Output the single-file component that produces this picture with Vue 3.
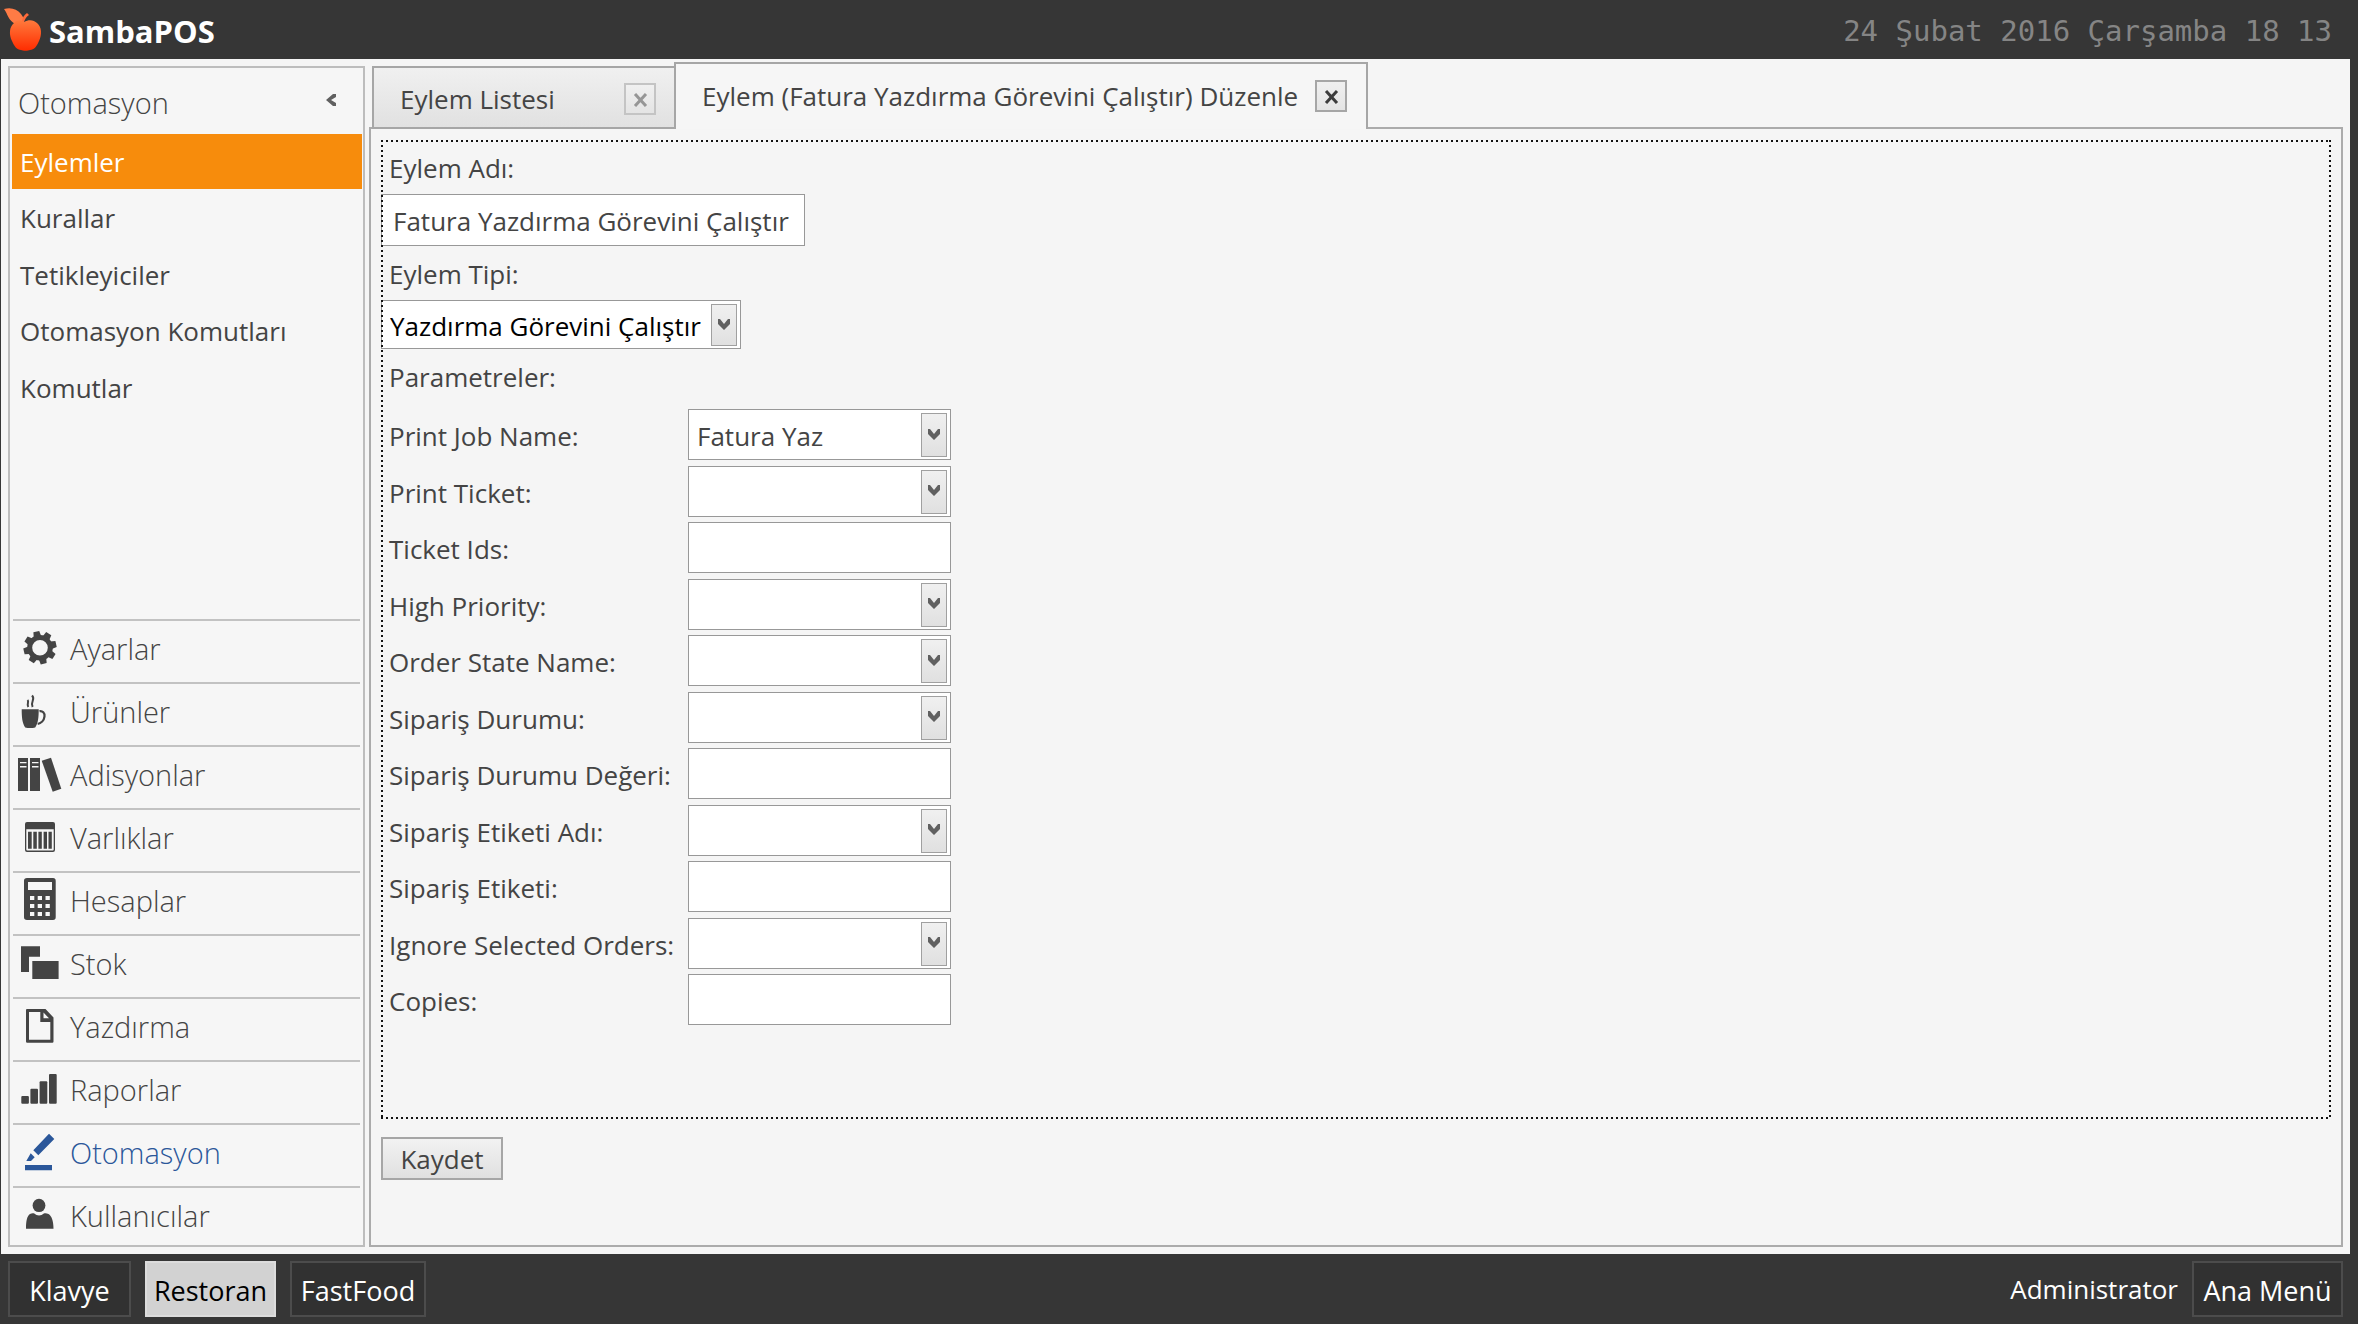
<script setup>
import { ref } from 'vue'

const sections = ['Eylemler', 'Kurallar', 'Tetikleyiciler', 'Otomasyon Komutları', 'Komutlar']
const activeSection = ref('Eylemler')

const modules = [
  { id: 'settings', label: 'Ayarlar' },
  { id: 'products', label: 'Ürünler' },
  { id: 'tickets', label: 'Adisyonlar' },
  { id: 'entities', label: 'Varlıklar' },
  { id: 'accounts', label: 'Hesaplar' },
  { id: 'stock', label: 'Stok' },
  { id: 'printing', label: 'Yazdırma' },
  { id: 'reports', label: 'Raporlar' },
  { id: 'automation', label: 'Otomasyon' },
  { id: 'users', label: 'Kullanıcılar' }
]
const activeModule = ref('automation')

const gearTeeth = [0, 1, 2, 3, 4, 5, 6, 7].map(n => n * 45 - 13)

const actionName = ref('Fatura Yazdırma Görevini Çalıştır')

const params = ref([
  { id: 'job', label: 'Print Job Name:', combo: true, value: 'Fatura Yaz' },
  { id: 'ticket', label: 'Print Ticket:', combo: true, value: '' },
  { id: 'ids', label: 'Ticket Ids:', combo: false, value: '' },
  { id: 'priority', label: 'High Priority:', combo: true, value: '' },
  { id: 'state-name', label: 'Order State Name:', combo: true, value: '' },
  { id: 'state', label: 'Sipariş Durumu:', combo: true, value: '' },
  { id: 'state-value', label: 'Sipariş Durumu Değeri:', combo: false, value: '' },
  { id: 'tag-name', label: 'Sipariş Etiketi Adı:', combo: true, value: '' },
  { id: 'tag', label: 'Sipariş Etiketi:', combo: false, value: '' },
  { id: 'ignore', label: 'Ignore Selected Orders:', combo: true, value: '' },
  { id: 'copies', label: 'Copies:', combo: false, value: '' }
])
</script>

<template>
  <div class="app">
    <header class="topbar">
      <svg class="logo" width="40" height="46" viewBox="0 0 40 46" aria-hidden="true">
        <defs>
          <linearGradient id="apple" x1="0" y1="0" x2="0" y2="1">
            <stop offset="0" stop-color="#ff7a3c" />
            <stop offset="1" stop-color="#ff2c00" />
          </linearGradient>
        </defs>
        <path d="M1 2C8 0 14 2 18 7c2 3 3 4 3 7-5 0-5 1-8 3C5 14 5 7 1 2z" fill="#ff7b45" />
        <path d="M19 15c0-4 2-7 5-9l2 2c-3 2-4 4-5 7z" fill="#ff6a3a" />
        <path d="M21 15c5-3 10-2 13 1 5 4 5 12 2 18-2 5-5 9-9 9-2 1-7 1-9 0-4 0-7-4-9-9-3-6-3-14 2-18 3-3 6-3 10-1z" fill="url(#apple)" />
      </svg>
      <h1 class="brand">SambaPOS</h1>
      <time class="clock" datetime="2016-02-24T18:13">24 Şubat 2016 Çarşamba 18 13</time>
    </header>

    <main class="workspace">
      <aside class="sidebar">
        <div class="sidebar-head">
          <h2>Otomasyon</h2>
          <button type="button" class="collapse" aria-label="Daralt">
            <svg width="10" height="12" viewBox="0 0 10 12"><path d="M10 0v3L5 6l5 3v3H7L0 6l7-6z" fill="#606060" /></svg>
          </button>
        </div>
        <ul class="sections">
          <li v-for="s in sections" :key="s">
            <a href="#" :class="{ active: s === activeSection }" @click.prevent="activeSection = s">{{ s }}</a>
          </li>
        </ul>
        <nav class="modules">
          <a
            v-for="m in modules"
            :key="m.id"
            href="#"
            :class="{ active: m.id === activeModule }"
            @click.prevent="activeModule = m.id"
          >
            <svg width="57" height="56" viewBox="0 0 57 56" fill="currentColor" aria-hidden="true">
              <g v-if="m.id === 'settings'">
                <circle cx="27" cy="26.7" r="10.3" fill="none" stroke="currentColor" stroke-width="5" />
                <path v-for="a in gearTeeth" :key="a" d="M23.2 15.5l.8-5.3h6l.8 5.3z" :transform="`rotate(${a} 27 26.7)`" />
              </g>
              <g v-else-if="m.id === 'products'">
                <path d="M8.7 25.3h17c0 8-.5 14-3.5 18.2-3 .7-7 .7-10 0-3-4.5-3.500-10.200-3.500-18.200z" />
                <path d="M26.5 27.2c3-.5 5.500 1.800 5 5.300-.5 4-3.500 7-6.800 7.500" fill="none" stroke="currentColor" stroke-width="2.2" />
                <path d="M14.5 16c2 2.200-1.200 3.600.8 7M19 11.500c4 4-2.200 6 .6 11.500" fill="none" stroke="currentColor" stroke-width="2" />
              </g>
              <g v-else-if="m.id === 'tickets'">
                <path fill-rule="evenodd" d="M5 11h10v33H5zM7 15v1.300h6.500V15zM7 19v1.500h6.500V19zM17 11h10v33H17zM19 15v1.300h6.500V15zM19 19v1.500h6.500V19z" />
                <path d="M28.7 13.7l9.300-3 10.300 31-8.600 3z" />
              </g>
              <g v-else-if="m.id === 'entities'">
                <path fill-rule="evenodd" d="M14 12h26q2 0 2 2v26q0 2-2 2H14q-2 0-2-2V14q0-2 2-2zM13.300 19.300v20.300q0 1 1 1h25.400q1 0 1-1V19.300z" />
                <path d="M15 21.700h3.700v17H15zM20.300 21.700h3.500v17h-3.500zM25.400 21.700h3.400v17h-3.400zM30.600 21.700H34v17h-3.400zM35.500 21.700h3.300v17h-3.300z" />
              </g>
              <path
                v-else-if="m.id === 'accounts'"
                fill-rule="evenodd"
                d="M14 5h26q2.700 0 2.700 2.700v36.600q0 2.700-2.700 2.700H14q-3 0-3-2.700V7.700Q11 5 14 5zM15 9v8h24V9zM17 23v4h4.300v-4zM24.700 23v4H29v-4zM32.500 23v4h4.300v-4zM17 31v4h4.300v-4zM24.700 31v4H29v-4zM32.500 31v4h4.300v-4zM17 39v4h4.300v-4zM24.700 39v4H29v-4zM32.500 39v4h4.300v-4z"
              />
              <path v-else-if="m.id === 'stock'" d="M8 10.300h19v10.400H16V36H8zM19.300 25h26.300v18H19.300z" />
              <path
                v-else-if="m.id === 'printing'"
                fill-rule="evenodd"
                d="M14 10h18.500l8 8.500v24q0 1.200-1.200 1.200H14.200Q13 43.700 13 42.500V11q0-1 1-1zM16 13v27.700h21.300V23H27.300V13zM30.500 13.500v5.800H36z"
              />
              <g v-else-if="m.id === 'reports'">
                <rect x="8.3" y="34" width="7.6" height="7.7" rx="1" />
                <rect x="17.4" y="26.7" width="7.6" height="15" rx="1" />
                <rect x="26.6" y="19.3" width="7.7" height="22.4" rx="1" />
                <rect x="36" y="12" width="7.7" height="29.7" rx="1" />
              </g>
              <path v-else-if="m.id === 'automation'" d="M36 8.700l5.300 5.300-16 16.300-5-5zM17.700 28.200l4 4.100-3.700 3.700h-4.700zM12 40h27v5.300H12z" />
              <g v-else>
                <ellipse cx="26" cy="17.4" rx="6.4" ry="6.7" />
                <path d="M13 40.700c0-8 1.200-13 4-14.700 1.500-.8 3-.8 4.300-.5 2.600 2.500 6.900 2.500 9.500 0 1.500-.3 3-.2 4.700.5 3 1.700 5 6.700 5 14.700z" />
              </g>
            </svg>
            <span>{{ m.label }}</span>
          </a>
        </nav>
      </aside>

      <section class="content">
        <div class="tabs">
          <div class="tab">
            <span>Eylem Listesi</span>
            <button type="button" class="close" aria-label="Kapat">
              <svg width="15" height="14" viewBox="0 0 15 14"><path d="M2 1l11 12M13 1L2 13" stroke="currentColor" stroke-width="3" /></svg>
            </button>
          </div>
          <div class="tab current">
            <span>Eylem (Fatura Yazdırma Görevini Çalıştır) Düzenle</span>
            <button type="button" class="close" aria-label="Kapat">
              <svg width="15" height="14" viewBox="0 0 15 14"><path d="M2 1l11 12M13 1L2 13" stroke="currentColor" stroke-width="3" /></svg>
            </button>
          </div>
        </div>

        <form class="panel" @submit.prevent>
          <div class="editor">
            <label class="caption" for="action-name">Eylem Adı:</label>
            <input id="action-name" v-model="actionName" class="field name" type="text" />
            <label class="caption" for="action-type">Eylem Tipi:</label>
            <div class="combo type">
              <select id="action-type" class="field">
                <option>Yazdırma Görevini Çalıştır</option>
              </select>
              <span class="drop"><svg width="12" height="11" viewBox="0 0 12 11"><path d="M0 0h2l4 5 4-5h2v5l-6 6-6-6z" fill="#606060" /></svg></span>
            </div>
            <p class="caption params-title">Parametreler:</p>
            <div class="params">
              <template v-for="p in params" :key="p.id">
                <label class="caption" :for="p.id">{{ p.label }}</label>
                <div v-if="p.combo" class="combo">
                  <select :id="p.id" v-model="p.value" class="field">
                    <option>{{ p.value }}</option>
                  </select>
                  <span class="drop"><svg width="12" height="11" viewBox="0 0 12 11"><path d="M0 0h2l4 5 4-5h2v5l-6 6-6-6z" fill="#606060" /></svg></span>
                </div>
                <input v-else :id="p.id" v-model="p.value" class="field" type="text" />
              </template>
            </div>
          </div>
          <button type="submit" class="save">Kaydet</button>
        </form>
      </section>
    </main>

    <footer class="bottombar">
      <button type="button" class="keyboard">Klavye</button>
      <button type="button" class="selected">Restoran</button>
      <button type="button" class="department">FastFood</button>
      <span class="user">Administrator</span>
      <button type="button" class="menu">Ana Menü</button>
    </footer>
  </div>
</template>

<style>
body {
  background: #363636;
}
</style>

<style scoped>
.app {
  display: flex;
  flex-direction: column;
  min-height: 100vh;
  background: #363636;
  color: #444;
  font-family: "Open Sans", "Noto Sans", sans-serif;
  font-size: 26px;
}
.app *,
.app *::after {
  box-sizing: border-box;
}
button,
input,
select {
  margin: 0;
  padding: 0;
  color: inherit;
  font: inherit;
}
h1,
h2,
p,
ul {
  margin: 0;
  padding: 0;
}
a {
  color: inherit;
  text-decoration: none;
}

/* Top bar */
.topbar {
  display: flex;
  align-items: center;
  height: 59px;
  padding: 2px 26px 0 3px;
}
.logo {
  flex: none;
  margin-bottom: 2px;
}
.brand {
  margin-left: 6px;
  color: #fff;
  font-size: 31px;
  font-weight: 700;
  line-height: 56px;
}
.clock {
  margin-left: auto;
  color: #858585;
  font-family: "DejaVu Sans Mono", monospace;
  font-size: 29px;
  line-height: 56px;
  white-space: nowrap;
}

/* Workspace */
.workspace {
  display: flex;
  flex: 1;
  gap: 4px;
  margin: 0 8px 0 1px;
  padding: 3px 7px 7px;
  background: #f5f5f5;
}
.sidebar {
  display: flex;
  flex: none;
  flex-direction: column;
  width: 357px;
  margin-top: 4px;
  border: 2px solid #bdbdbd;
  background: #f6f6f6;
}
.sidebar-head {
  display: flex;
  align-items: center;
  justify-content: space-between;
  height: 66px;
  padding: 2px 27px 0 8px;
}
.sidebar-head h2 {
  font-size: 29px;
  font-weight: 300;
}
.collapse {
  display: flex;
  margin-bottom: 4px;
  border: 0;
  background: none;
}
.sections {
  display: flex;
  flex-direction: column;
  height: 282px;
  margin: 0 1px 0 2px;
  list-style: none;
}
.sections li {
  flex: 1;
}
.sections a {
  display: block;
  height: 55px;
  padding-left: 8px;
  line-height: 57px;
}
.sections .active {
  background: #f78c0c;
  color: #fff;
}
.modules {
  margin: auto 3px 0;
  font-size: 29px;
  font-weight: 300;
  line-height: 55px;
}
.modules a {
  display: flex;
  height: 63px;
  border-top: 2px solid #c2c2c2;
}
.modules a:last-child {
  height: 59px;
}
.modules svg {
  flex: none;
}
.modules .active {
  color: #2b579a;
}

/* Tabs */
.content {
  display: flex;
  flex: 1;
  flex-direction: column;
  min-width: 0;
}
.tabs {
  position: relative;
  z-index: 1;
  display: flex;
  align-items: flex-end;
  margin: 0 0 -2px 3px;
}
.tab {
  display: flex;
  align-items: center;
  justify-content: space-between;
  width: 302px;
  height: 63px;
  padding: 2px 18px 0 26px;
  border: 2px solid #a6a6a6;
  border-right: 0;
  background: linear-gradient(#f0f0f0, #e1e1e1);
  white-space: nowrap;
}
.tab.current {
  width: 694px;
  height: 67px;
  padding: 0 19px 2px 26px;
  border-right: 2px solid #a6a6a6;
  border-bottom: 0;
  background: #f6f6f6;
}
.close {
  display: flex;
  align-items: center;
  justify-content: center;
  width: 32px;
  height: 32px;
  padding-top: 3px;
  border: 2px solid #c4c4c4;
  background: linear-gradient(#f0f0f0, #e4e4e4);
  color: #969696;
}
.current .close {
  border-color: #a6a6a6;
  color: #3c3c3c;
}

/* Editor */
.panel {
  display: flex;
  flex: 1;
  flex-direction: column;
  align-items: flex-start;
  padding: 11px 10px 65px;
  border: 2px solid #ababab;
}
.editor {
  position: relative;
  flex: 1;
  align-self: stretch;
}
.editor::after {
  position: absolute;
  inset: 0;
  background:
    repeating-linear-gradient(90deg, #111 0 2px, transparent 2px 5px) top / 100% 2px no-repeat,
    repeating-linear-gradient(90deg, #111 0 2px, transparent 2px 5px) bottom / 100% 2px no-repeat,
    repeating-linear-gradient(#111 0 2px, transparent 2px 5px) left / 2px 100% no-repeat,
    repeating-linear-gradient(#111 0 2px, transparent 2px 5px) right / 2px 100% no-repeat;
  content: "";
  pointer-events: none;
}
.caption {
  display: block;
  padding: 2px 0 0 8px;
  line-height: 52px;
  white-space: nowrap;
}
.field {
  display: block;
  width: 100%;
  height: 51px;
  padding: 2px 8px 0;
  border: 1px solid #989898;
  border-radius: 0;
  outline: 0;
  appearance: none;
  background: #fff;
}
.field.name {
  width: 424px;
  height: 52px;
  padding-left: 11px;
}
.combo {
  position: relative;
}
.combo.type {
  width: 360px;
  color: #000;
}
.combo.type .field {
  height: 49px;
}
.drop {
  position: absolute;
  top: 4px;
  right: 4px;
  bottom: 3px;
  display: flex;
  align-items: center;
  justify-content: center;
  width: 26px;
  padding-bottom: 2px;
  border: 1px solid #a0a0a0;
  background: linear-gradient(#f0f0f0, #e0e0e0);
  pointer-events: none;
}
.params-title {
  margin-bottom: 6px;
}
.params {
  display: grid;
  grid-template-rows: repeat(11, 1fr);
  grid-template-columns: 307px 263px;
  align-items: start;
  height: 622px;
}
.params .caption {
  padding-top: 1px;
}
.save {
  width: 122px;
  height: 43px;
  margin-top: 18px;
  border: 2px solid #a6a6a6;
  background: linear-gradient(#f2f2f2, #e0e0e0);
}

/* Bottom bar */
.bottombar {
  display: flex;
  gap: 14px;
  height: 70px;
  padding: 7px 15px 7px 8px;
  color: #fff;
  font-size: 27px;
}
.bottombar button {
  min-width: 131px;
  height: 56px;
  padding: 2px 4px 0;
  border: 2px solid #4c4c4c;
  background: #313131;
}
.bottombar .keyboard {
  min-width: 123px;
}
.bottombar .department {
  min-width: 136px;
}
.bottombar .menu {
  min-width: 151px;
}
.bottombar .selected {
  border-color: #dcdcdc;
  background: #d2d2d2;
  color: #000;
}
.user {
  margin-left: auto;
  font-size: 26px;
  line-height: 56px;
}
</style>
